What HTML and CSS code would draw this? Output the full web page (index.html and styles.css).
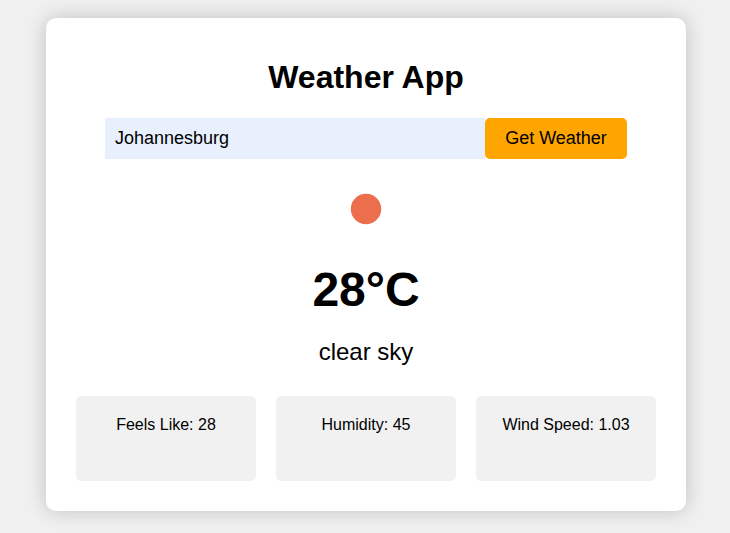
FILE: index.html
```html
<!DOCTYPE html>
<html lang="en">
<head>
<meta charset="utf-8">
<title>Weather App</title>
<link rel="stylesheet" href="styles.css">
</head>
<body>
<main class="container">
  <h1 class="title">Weather App</h1>
  <form class="search">
    <input class="city" type="text" value="Johannesburg" aria-label="City">
    <button class="submit" type="button">Get Weather</button>
  </form>
  <svg class="icon" viewBox="0 0 100 100" aria-hidden="true"><circle cx="50" cy="50" r="15.2"/></svg>
  <p class="temp">28°C</p>
  <p class="description">clear sky</p>
  <div class="details">
    <div class="detail">Feels Like: 28</div>
    <div class="detail">Humidity: 45</div>
    <div class="detail">Wind Speed: 1.03</div>
  </div>
</main>
</body>
</html>
```
FILE: styles.css
```css
* { box-sizing: border-box; }
body {
  display: flow-root;
  margin: 0;
  height: 533px;
  overflow: hidden;
  background: #f0f0f0;
  font-family: "Liberation Sans", Arial, sans-serif;
  color: #000;
}
.container {
  width: 640px;
  height: 493px;
  margin: 18px 0 0 46px;
  padding: 40px 30px 30px;
  background: #fff;
  border-radius: 10px;
  box-shadow: 0 0 20px rgba(0, 0, 0, 0.2);
  display: flex;
  flex-direction: column;
  align-items: center;
}
.title { margin: 0 0 22px; font-size: 32px; line-height: 38px; }
.search { display: flex; width: 522px; height: 41px; }
.city {
  width: 380px;
  padding: 0 10px;
  border: 0;
  border-radius: 0;
  background: #e8f0fe;
  color: #000;
  font: 18px "Liberation Sans", Arial, sans-serif;
}
.submit {
  flex: 1;
  padding: 0;
  border: 0;
  border-radius: 5px;
  background: orange;
  color: #000;
  font: 18px "Liberation Sans", Arial, sans-serif;
}
.icon { width: 100px; height: 100px; fill: #ec6e4c; }
.temp { margin: 3px 0 0; font-size: 48px; font-weight: bold; line-height: 56px; }
.description { margin: 20px 0 0; font-size: 24px; line-height: 28px; }
.details { display: flex; gap: 20px; width: 100%; margin-top: 30px; }
.detail {
  flex: 1;
  height: 85px;
  padding-top: 19px;
  border-radius: 5px;
  background: #f1f1f1;
  font-size: 16px;
  line-height: 19px;
  text-align: center;
}
```
